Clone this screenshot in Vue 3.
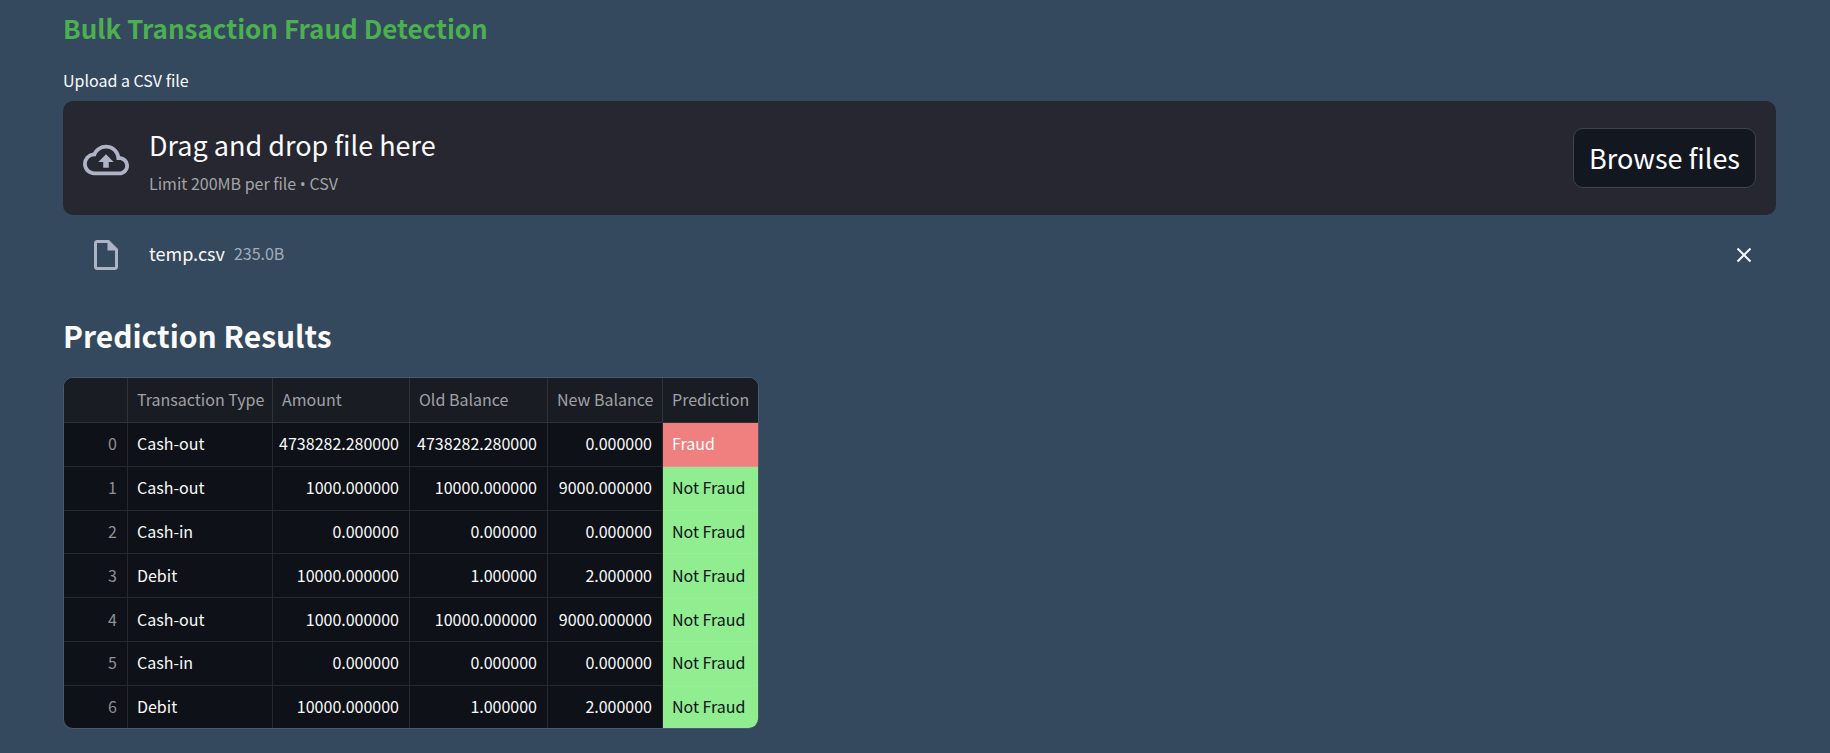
<script setup>
import { ref } from 'vue'

const fileInput = ref(null)
const file = ref({ name: 'temp.csv', size: '235.0B' })

const columns = ['Transaction Type', 'Amount', 'Old Balance', 'New Balance', 'Prediction']
const rows = [
  ['Cash-out', '4738282.280000', '4738282.280000', '0.000000', 'Fraud'],
  ['Cash-out', '1000.000000', '10000.000000', '9000.000000', 'Not Fraud'],
  ['Cash-in', '0.000000', '0.000000', '0.000000', 'Not Fraud'],
  ['Debit', '10000.000000', '1.000000', '2.000000', 'Not Fraud'],
  ['Cash-out', '1000.000000', '10000.000000', '9000.000000', 'Not Fraud'],
  ['Cash-in', '0.000000', '0.000000', '0.000000', 'Not Fraud'],
  ['Debit', '10000.000000', '1.000000', '2.000000', 'Not Fraud']
]
</script>

<template>
  <main class="page">
    <h3 class="title">Bulk Transaction Fraud Detection</h3>

    <label class="upload-label" for="csv-file">Upload a CSV file</label>
    <section class="dropzone">
      <input id="csv-file" ref="fileInput" class="file-input" type="file" accept=".csv" tabindex="-1" />
      <svg class="cloud" viewBox="0 0 24 24" aria-hidden="true">
        <path d="M19.35 10.04A7.49 7.49 0 0012 4C9.11 4 6.6 5.64 5.35 8.04A5.994 5.994 0 000 14c0 3.31 2.69 6 6 6h13c2.76 0 5-2.24 5-5 0-2.64-2.05-4.78-4.65-4.96zM19 18H6c-2.21 0-4-1.79-4-4s1.79-4 4-4h.71C7.37 7.69 9.48 6 12 6c3.04 0 5.5 2.46 5.5 5.5v.5H19c1.66 0 3 1.34 3 3s-1.34 3-3 3zM8 13h2.55v3h2.9v-3H16l-4-4-4 4z" />
      </svg>
      <div class="instructions">
        <span class="drag">Drag and drop file here</span>
        <span class="limit">Limit 200MB per file <span class="bullet">•</span> CSV</span>
      </div>
      <button class="browse" type="button" @click="fileInput.click()">Browse files</button>
    </section>

    <div class="file-row">
      <svg class="file-icon" viewBox="0 0 24 24" aria-hidden="true">
        <path d="M6 2c-1.1 0-1.99.9-1.99 2L4 20c0 1.1.89 2 1.99 2H18c1.1 0 2-.9 2-2V8l-6-6H6zm0 18V4h7v5h5v11H6z" />
      </svg>
      <span class="file-name">{{ file.name }}</span>
      <span class="file-size">{{ file.size }}</span>
      <button class="remove" type="button" aria-label="Remove file">
        <svg viewBox="0 0 16 16" aria-hidden="true"><path d="M1.5 1.5l13 13M14.5 1.5l-13 13" /></svg>
      </button>
    </div>

    <h2 class="results-title">Prediction Results</h2>
    <div class="frame">
      <table class="results">
        <colgroup>
          <col class="c-index" />
          <col class="c-type" />
          <col class="c-amount" />
          <col class="c-old" />
          <col class="c-new" />
          <col class="c-pred" />
        </colgroup>
        <thead>
          <tr>
            <th></th>
            <th v-for="c in columns" :key="c" scope="col">{{ c }}</th>
          </tr>
        </thead>
        <tbody>
          <tr v-for="(r, i) in rows" :key="i">
            <td class="index">{{ i }}</td>
            <td>{{ r[0] }}</td>
            <td class="num">{{ r[1] }}</td>
            <td class="num">{{ r[2] }}</td>
            <td class="num">{{ r[3] }}</td>
            <td :class="r[4] === 'Fraud' ? 'fraud' : 'safe'">{{ r[4] }}</td>
          </tr>
        </tbody>
      </table>
    </div>
  </main>
</template>

<style>
body {
  margin: 0;
  background: #34495e;
}
</style>

<style scoped>
.page {
  padding: 11px 54px 24px 63px;
  font-family: "Noto Sans CJK SC", "Noto Sans", sans-serif;
  color: #fafafa;
}
.title {
  margin: 0;
  font-size: 26px;
  line-height: 34px;
  font-weight: 700;
  color: #4caf50;
}
.upload-label {
  display: block;
  margin-top: 23px;
  font-size: 16px;
  line-height: 24px;
}
.dropzone {
  display: flex;
  align-items: center;
  margin-top: 9px;
  padding: 20px;
  min-height: 74px;
  border-radius: 10px;
  background: #262730;
}
.file-input {
  display: none;
}
.cloud {
  flex: none;
  width: 46px;
  height: 46px;
  margin-top: 4px;
  margin-right: 20px;
  fill: #afb3c6;
}
.instructions {
  display: flex;
  flex-direction: column;
  gap: 6px;
  margin-right: auto;
  padding-top: 4px;
}
.drag {
  font-size: 27px;
  line-height: 40px;
}
.limit {
  font-size: 16px;
  line-height: 24px;
  color: #a3a4a8;
}
.bullet {
  font-family: "Open Sans", sans-serif;
  line-height: 16px;
}
.browse {
  height: 60px;
  padding: 0 15px;
  border: 1px solid #41434b;
  border-radius: 10px;
  background: #131720;
  color: #fff;
  font-family: inherit;
  font-size: 27px;
  line-height: 40px;
}
.file-row {
  display: flex;
  align-items: center;
  height: 40px;
  margin-top: 20px;
  padding: 0 20px 0 25px;
}
.file-icon {
  width: 36px;
  height: 36px;
  margin-right: 25px;
  fill: #afb3c6;
}
.file-name,
.file-size {
  padding-bottom: 4px;
}
.file-name {
  margin-right: 9px;
  font-size: 18px;
  line-height: 24px;
}
.file-size {
  margin-right: auto;
  font-size: 16px;
  line-height: 24px;
  color: #a3adb8;
}
.remove {
  display: flex;
  padding: 4px;
  border: 0;
  background: none;
}
.remove svg {
  width: 16px;
  height: 16px;
  fill: none;
  stroke: #fafafa;
  stroke-width: 2;
}
.results-title {
  margin: 40px 0 22px;
  font-size: 30px;
  line-height: 40px;
  font-weight: 700;
}
.frame {
  width: max-content;
  overflow: hidden;
  border: 1px solid #485b6e;
  border-radius: 10px;
  background: #0e1117;
}
.results {
  table-layout: fixed;
  width: 694px;
  height: 350px;
  border-spacing: 0;
  font-size: 16px;
  line-height: 24px;
}
.results thead tr {
  height: 45px;
}
.c-index { width: 64px; }
.c-type { width: 145px; }
.c-amount { width: 137px; }
.c-old { width: 138px; }
.c-new { width: 115px; }
.c-pred { width: 95px; }
th,
td {
  padding: 0 10px 2px 9px;
  border-right: 1px solid rgba(250, 250, 250, 0.1);
  border-bottom: 1px solid rgba(250, 250, 250, 0.1);
  text-align: left;
  white-space: nowrap;
}
th:last-child,
td:last-child {
  border-right: 0;
}
tbody tr:last-child td {
  border-bottom: 0;
}
th {
  background: #1a1c24;
  color: #a0a1a5;
  font-weight: 400;
}
.index {
  text-align: right;
  color: #8f9094;
}
.num {
  padding-left: 0;
  text-align: right;
}
.fraud {
  background: #f08080;
}
.safe {
  background: #90ee90;
  color: #0e1117;
}
</style>
